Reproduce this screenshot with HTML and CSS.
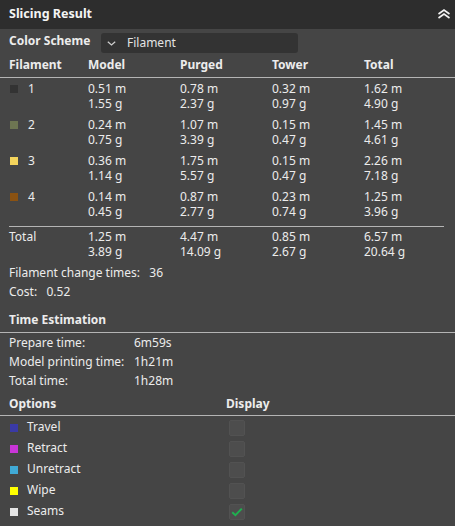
FILE: index.html
```html
<!DOCTYPE html>
<html lang="en">
<head>
    <meta charset="UTF-8">
    <title>Slicing Result</title>
    <link rel="stylesheet" href="styles.css">
</head>
<body>
    <div class="panel">
        <div class="panel-header">
            <span class="panel-title">Slicing Result</span>
            <svg class="collapse-icon" width="14" height="10" viewBox="0 0 14 10">
                <polyline points="1.5,5 7,1 12.5,5" fill="none" stroke="#f2f2f2" stroke-width="1.6"/>
                <polyline points="1.5,9 7,5 12.5,9" fill="none" stroke="#f2f2f2" stroke-width="1.6"/>
            </svg>
        </div>

        <div class="scheme-row">
            <span class="scheme-label">Color Scheme</span>
            <div class="select">
                <svg width="9" height="5" viewBox="0 0 9 5">
                    <polyline points="0.8,0.8 4.5,4 8.2,0.8" fill="none" stroke="#d0d0d0" stroke-width="1.2"/>
                </svg>
                <span>Filament</span>
            </div>
        </div>

        <div class="grid grid-head">
            <span>Filament</span>
            <span>Model</span>
            <span>Purged</span>
            <span>Tower</span>
            <span>Total</span>
        </div>

        <div class="filaments">
            <div class="grid row">
                <span class="fil"><i class="swatch" style="background:#333333"></i>1</span>
                <div><p>0.51 m</p><p>1.55 g</p></div>
                <div><p>0.78 m</p><p>2.37 g</p></div>
                <div><p>0.32 m</p><p>0.97 g</p></div>
                <div><p>1.62 m</p><p>4.90 g</p></div>
            </div>
            <div class="grid row">
                <span class="fil"><i class="swatch" style="background:#6d7552"></i>2</span>
                <div><p>0.24 m</p><p>0.75 g</p></div>
                <div><p>1.07 m</p><p>3.39 g</p></div>
                <div><p>0.15 m</p><p>0.47 g</p></div>
                <div><p>1.45 m</p><p>4.61 g</p></div>
            </div>
            <div class="grid row">
                <span class="fil"><i class="swatch" style="background:#f4d45c"></i>3</span>
                <div><p>0.36 m</p><p>1.14 g</p></div>
                <div><p>1.75 m</p><p>5.57 g</p></div>
                <div><p>0.15 m</p><p>0.47 g</p></div>
                <div><p>2.26 m</p><p>7.18 g</p></div>
            </div>
            <div class="grid row">
                <span class="fil"><i class="swatch" style="background:#8a5212"></i>4</span>
                <div><p>0.14 m</p><p>0.45 g</p></div>
                <div><p>0.87 m</p><p>2.77 g</p></div>
                <div><p>0.23 m</p><p>0.74 g</p></div>
                <div><p>1.25 m</p><p>3.96 g</p></div>
            </div>
        </div>

        <div class="grid row total">
            <span>Total</span>
            <div><p>1.25 m</p><p>3.89 g</p></div>
            <div><p>4.47 m</p><p>14.09 g</p></div>
            <div><p>0.85 m</p><p>2.67 g</p></div>
            <div><p>6.57 m</p><p>20.64 g</p></div>
        </div>

        <div class="stats">
            <p>Filament change times:&nbsp;&nbsp;&nbsp;36</p>
            <p>Cost:&nbsp;&nbsp;&nbsp;0.52</p>
        </div>

        <div class="section-head">Time Estimation</div>
        <div class="times">
            <div class="time-row"><span>Prepare time:</span><span>6m59s</span></div>
            <div class="time-row"><span>Model printing time:</span><span>1h21m</span></div>
            <div class="time-row"><span>Total time:</span><span>1h28m</span></div>
        </div>

        <div class="section-head options-head">
            <span>Options</span>
            <span>Display</span>
        </div>
        <div class="options">
            <div class="option"><span class="opt-name"><i class="swatch" style="background:#3a3aa6"></i>Travel</span><span class="check"></span></div>
            <div class="option"><span class="opt-name"><i class="swatch" style="background:#c935d8"></i>Retract</span><span class="check"></span></div>
            <div class="option"><span class="opt-name"><i class="swatch" style="background:#40aad6"></i>Unretract</span><span class="check"></span></div>
            <div class="option"><span class="opt-name"><i class="swatch" style="background:#ffff00"></i>Wipe</span><span class="check"></span></div>
            <div class="option">
                <span class="opt-name"><i class="swatch" style="background:#e4e4e4"></i>Seams</span>
                <span class="check">
                    <svg width="12" height="10" viewBox="0 0 12 10">
                        <polyline points="1.2,5.2 4.4,8.2 10.8,1.6" fill="none" stroke="#1fb050" stroke-width="2"/>
                    </svg>
                </span>
            </div>
        </div>
    </div>
</body>
</html>
```

FILE: styles.css
```css
* {
    margin: 0;
    padding: 0;
    box-sizing: border-box;
}

body {
    background: #454545;
    font-family: "Noto Sans", "Liberation Sans", sans-serif;
    font-size: 12px;
    line-height: 14.5px;
    color: #ececec;
}

.panel {
    width: 455px;
    height: 526px;
    overflow: hidden;
}

.panel-header {
    height: 29px;
    background: #2d2d2d;
    display: flex;
    align-items: center;
    justify-content: space-between;
    padding: 0 4px 0 9px;
}

.panel-title {
    font-weight: bold;
    font-size: 12.5px;
    color: #f4f4f4;
}

.collapse-icon {
    margin-top: -1px;
}

.scheme-row {
    height: 28px;
    display: flex;
    align-items: center;
    padding-left: 9px;
}

.scheme-label {
    font-weight: bold;
    width: 92px;
    margin-top: -4px;
}

.select {
    width: 197px;
    height: 20px;
    background: #333333;
    border-radius: 3px;
    display: flex;
    align-items: center;
    gap: 11px;
    padding-left: 6px;
    color: #e4e4e4;
}

.grid {
    display: grid;
    grid-template-columns: 79px 92px 92px 92px 1fr;
    padding-left: 9px;
}

.grid-head {
    height: 21px;
    font-weight: bold;
    border-bottom: 1px solid #b4b4b4;
    padding-top: 1px;
}

.filaments {
    padding-top: 4px;
    padding-bottom: 6px;
}

.row {
    height: 36px;
}

.row:last-child {
    height: 30px;
}

.fil {
    display: flex;
    align-items: flex-start;
    gap: 10px;
}

.swatch {
    display: inline-block;
    width: 8px;
    height: 8px;
    flex-shrink: 0;
    margin-top: 3px;
    margin-left: 1px;
}

.total {
    margin: 0 11px 0 9px;
    padding: 3px 0 0;
    border-top: 1px solid #b4b4b4;
    height: 35px;
}

.stats {
    padding: 5px 9px 0;
}

.stats p {
    height: 19px;
}

.section-head {
    margin-top: 5px;
    padding: 4px 9px 4px;
    font-weight: bold;
    border-bottom: 1px solid #b4b4b4;
}

.times {
    padding: 3px 9px 0;
}

.time-row {
    display: flex;
    height: 19px;
}

.time-row span:first-child {
    width: 125px;
}

.options-head {
    display: flex;
    margin-top: 0;
}

.options-head span:first-child {
    width: 217px;
}

.options {
    padding: 1px 9px 0;
}

.option {
    display: flex;
    align-items: center;
    height: 21px;
}

.opt-name {
    width: 220px;
    display: flex;
    align-items: center;
    gap: 9px;
}

.opt-name .swatch {
    margin-top: 0;
}

.check {
    width: 16px;
    height: 16px;
    background: #4d4d4d;
    border: 1px solid #525252;
    border-radius: 2px;
    display: flex;
    align-items: center;
    justify-content: center;
}
```
